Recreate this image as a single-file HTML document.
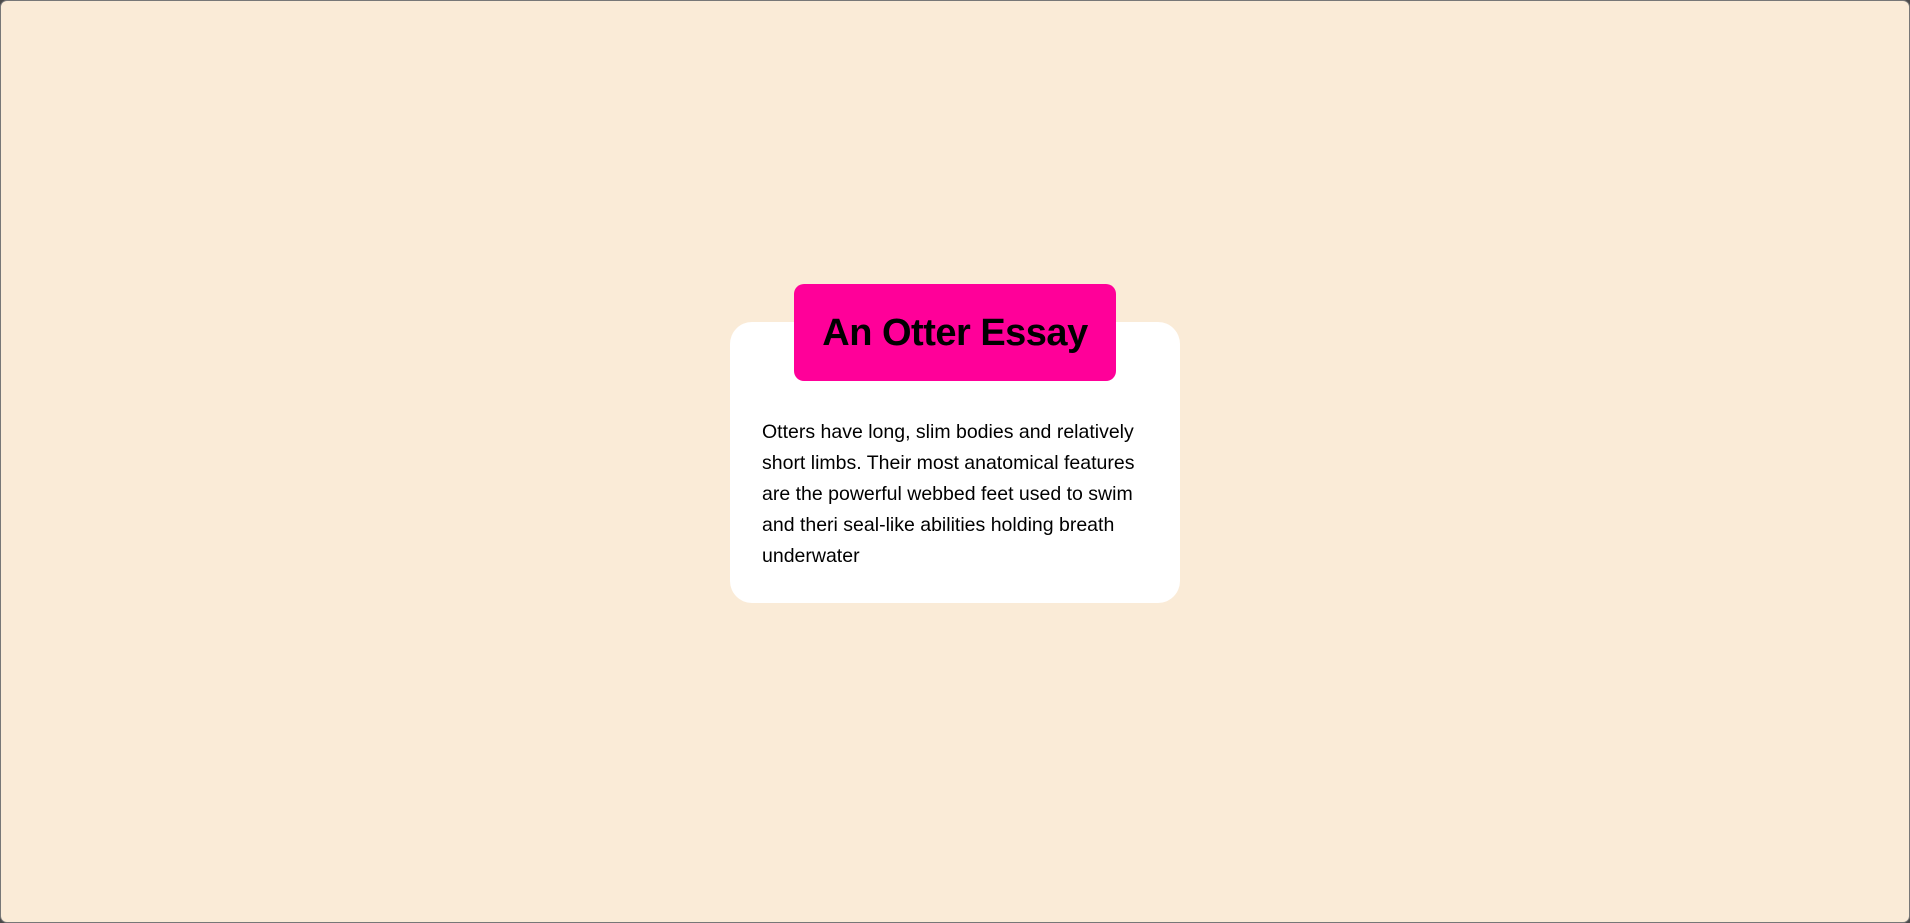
<!DOCTYPE html>
<html><head><meta charset="utf-8"><style>
html,body{margin:0;padding:0;width:1910px;height:923px;overflow:hidden;background:#4a4a4a;}
.page{position:absolute;left:0;top:0;width:1908px;height:921px;border:1px solid #777;border-radius:7px;background:#faebd7;}
.card{position:absolute;left:730px;top:322px;width:450px;height:281px;background:#fff;border-radius:22px;}
.title{position:absolute;left:794px;top:284px;width:322px;height:97px;background:#ff0099;border-radius:10px;
font-family:"Liberation Sans",sans-serif;font-weight:bold;font-size:38px;color:#000;text-align:center;line-height:99px;letter-spacing:-0.5px;}
.text{position:absolute;left:762px;top:417px;width:410px;font-family:"Liberation Sans",sans-serif;font-size:19.5px;line-height:31px;color:#000;}
</style></head><body>
<div class="page"></div>
<div class="card"></div>
<div class="title">An Otter Essay</div>
<div class="text">Otters have long, slim bodies and relatively<br>short limbs. Their most anatomical features<br>are the powerful webbed feet used to swim<br>and theri seal-like abilities holding breath<br>underwater</div>
</body></html>
